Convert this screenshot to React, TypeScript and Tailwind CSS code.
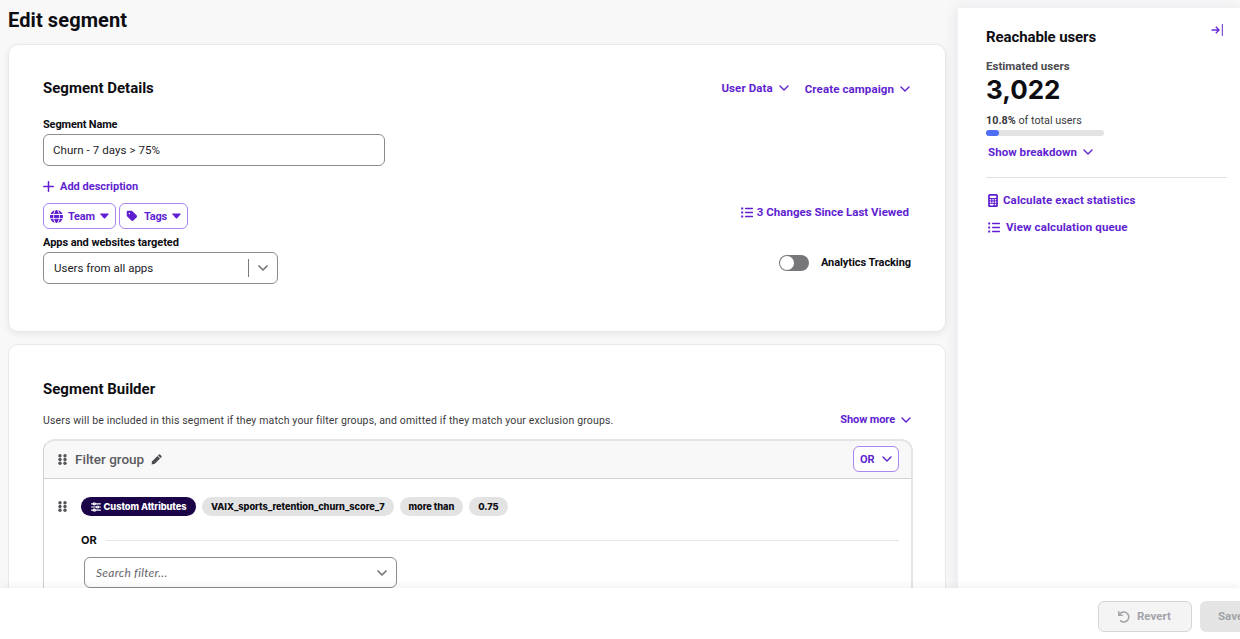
import React from "react";
import { FaCalculator, FaGlobe, FaTag } from "react-icons/fa6";

interface IIconProps {
    className?: string;
}

const ChevronIcon: React.FC<IIconProps> = ({ className = "stroke-[1.4]" }) => {
    return (
        <svg
            viewBox="0 0 10 6"
            fill="none"
            stroke="currentColor"
            strokeLinecap="round"
            strokeLinejoin="round"
            className={`w-2.5 h-1.5 shrink-0 ${className}`}
        >
            <path d="M1 1l4 4 4-4" />
        </svg>
    );
};

const CaretIcon: React.FC<IIconProps> = ({ className = "" }) => {
    return (
        <svg
            viewBox="0 0 8 5"
            fill="currentColor"
            stroke="currentColor"
            strokeLinejoin="round"
            className={`w-[9px] h-1.5 shrink-0 ${className}`}
        >
            <path d="M.7.7h6.6L4 4.3z" />
        </svg>
    );
};

const ListIcon: React.FC<IIconProps> = ({ className = "" }) => {
    return (
        <svg
            viewBox="0 0 12 11"
            fill="none"
            stroke="currentColor"
            className={`w-3 h-[11px] shrink-0 ${className}`}
        >
            <path d="M.2 1.5h2M.2 5.5h2M.2 9.5h2" strokeWidth="2" />
            <path
                d="M4.7 1.5h6.8M4.7 5.5h6.8M4.7 9.5h6.8"
                strokeWidth="1.5"
                strokeLinecap="round"
            />
        </svg>
    );
};

const GripIcon: React.FC<IIconProps> = ({ className = "" }) => {
    return (
        <svg
            viewBox="0 0 9 11"
            fill="currentColor"
            className={`w-[9px] h-[11px] shrink-0 text-[#55555a] ${className}`}
        >
            {[1.7, 5.5, 9.3].map((y) => (
                <g key={y}>
                    <circle cx="2" cy={y} r="1.7" />
                    <circle cx="7" cy={y} r="1.7" />
                </g>
            ))}
        </svg>
    );
};

const PencilIcon: React.FC<IIconProps> = ({ className = "" }) => {
    return (
        <svg
            viewBox="0 0 12 12"
            fill="currentColor"
            className={`shrink-0 ${className}`}
        >
            <path d="M.6 11.4l.7-3.6L7 2.1l2.9 2.9-5.7 5.7z" />
            <path d="M7.6 1.5l.7-.7a1.3 1.3 0 0 1 1.8 0l1.1 1.1a1.3 1.3 0 0 1 0 1.8l-.7.7z" />
        </svg>
    );
};

const SlidersIcon: React.FC = () => {
    return (
        <svg
            viewBox="0 0 10 10"
            fill="none"
            stroke="currentColor"
            strokeWidth="1.2"
            strokeLinecap="round"
            className="w-2.5 h-2.5 shrink-0"
        >
            <path d="M.6 1.8h1.6M4.4 1.8h5M.6 5h4.8M7.8 5h1.6M.6 8.2h1.6M4.4 8.2h5" />
            <circle cx="3.3" cy="1.8" r="1" />
            <circle cx="6.6" cy="5" r="1" />
            <circle cx="3.3" cy="8.2" r="1" />
        </svg>
    );
};

const Header: React.FC<{ children: React.ReactNode }> = ({ children }) => {
    return <h2 className="text-[15px] leading-5 font-bold">{children}</h2>;
};

const SegmentDetails: React.FC = () => {
    return (
        <section className="h-[288px] shrink-0 rounded-[10px] border border-[#e9e9eb] bg-white px-[34px] pt-[33px] shadow-[0_2px_6px_rgba(0,0,0,0.07)]">
            <div className="flex items-center justify-between">
                <Header>Segment Details</Header>
                <div className="mr-px flex items-center text-[11.5px] leading-4 font-bold tracking-[0.1px] text-[#5f1fd1]">
                    <button className="flex items-center gap-1.5">
                        User Data <ChevronIcon />
                    </button>
                    <button className="flex items-center gap-1.5 ml-4 mt-px">
                        Create campaign <ChevronIcon />
                    </button>
                </div>
            </div>

            <label className="block mt-[19px] text-[11px] leading-4 font-bold tracking-[-0.16px]">
                Segment Name
            </label>
            <div className="mt-px flex h-8 w-[342px] items-center rounded-md border border-[#8c8c90] px-[9px] text-[11.5px] tracking-[0.06px] pt-px text-[#222226]">
                Churn - 7 days &gt; 75%
            </div>

            <button className="mt-3 flex items-center gap-1.5 text-[11px] leading-[17px] font-bold text-[#5f1fd1]">
                <svg
                    viewBox="0 0 11 11"
                    stroke="currentColor"
                    strokeWidth="1.5"
                    strokeLinecap="round"
                    className="w-[11px] h-[11px]"
                >
                    <path d="M5.5 .8v9.4M.8 5.5h9.4" />
                </svg>
                Add description
            </button>

            <div className="mt-2 flex justify-between font-bold text-[#5f1fd1]">
                <div className="flex gap-[3px] text-[11px] leading-4">
                    <button className="flex h-[26px] w-[73px] items-center rounded-md border border-[#a887ee] pl-1.5">
                        <FaGlobe className="size-[13px]" />
                        <span className="ml-[5px] pt-px tracking-[-0.2px]">
                            Team
                        </span>
                        <CaretIcon className="ml-auto mr-1.5" />
                    </button>
                    <button className="flex h-[26px] w-[69px] items-center rounded-md border border-[#a887ee] pl-1.5">
                        <FaTag className="size-3" />
                        <span className="ml-1.5 pt-px tracking-[-0.2px]">
                            Tags
                        </span>
                        <CaretIcon className="ml-auto mr-1.5" />
                    </button>
                </div>
                <button className="mr-0.5 flex h-[18px] items-center gap-1 text-[11.5px] leading-4">
                    <ListIcon /> 3 Changes Since Last Viewed
                </button>
            </div>

            <div className="flex justify-between">
                <div>
                    <label className="block mt-1.5 text-[11px] leading-4 font-bold tracking-[-0.06px]">
                        Apps and websites targeted
                    </label>
                    <div className="mt-px flex h-8 w-[235px] items-center rounded-md border border-[#8c8c90] pl-2.5 text-[11.5px] text-[#222226]">
                        <span className="pt-0.5">Users from all apps</span>
                        <span className="ml-auto h-[18px] w-px bg-[#7b7b7f]" />
                        <ChevronIcon className="mx-[9px] text-[#77777b] stroke-[1.7]" />
                    </div>
                </div>
                <div className="mt-[26px] flex h-4 items-center gap-3 text-[11px] font-bold tracking-[-0.07px]">
                    <span className="flex h-4 w-[30px] items-center rounded-full bg-[#77777b] px-px">
                        <span className="size-3.5 rounded-full bg-white" />
                    </span>
                    Analytics Tracking
                </div>
            </div>
        </section>
    );
};

const chips = ["VAIX_sports_retention_churn_score_7", "more than", "0.75"];

const SegmentBuilder: React.FC = () => {
    return (
        <section className="mt-3 h-[400px] shrink-0 rounded-[10px] border border-[#e9e9eb] bg-white pl-[34px] pr-8 pt-[34px]">
            <Header>Segment Builder</Header>
            <div className="mt-3 mr-0.5 flex h-5 items-center justify-between">
                <p className="text-[10.5px] leading-4 tracking-[0.15px] text-[#3a3a3e]">
                    Users will be included in this segment if they match your
                    filter groups, and omitted if they match your exclusion
                    groups.
                </p>
                <button className="mb-0.5 flex items-center gap-1.5 text-[11px] leading-4 font-bold tracking-[-0.1px] text-[#5f1fd1]">
                    Show more <ChevronIcon />
                </button>
            </div>

            <div className="mt-2 h-[300px] overflow-hidden rounded-xl border-l border-t-2 border-r-2 border-l-[#cfcfd2] border-t-[#e4e4e6] border-r-[#e4e4e6]">
                <div className="flex h-[38px] items-center border-b border-[#d2d2d5] bg-[#f8f8f8] pl-3.5 pr-3">
                    <GripIcon />
                    <span className="ml-2 pb-0.5 text-[13.5px] leading-5 font-medium text-[#5a5a5e]">
                        Filter group
                    </span>
                    <PencilIcon className="ml-[7px] size-[11px] text-[#4b4b4f]" />
                    <button className="ml-auto mb-px flex h-[26px] w-[46px] items-center justify-between rounded-md border border-[#a887ee] bg-white px-1.5 text-[11px] font-bold text-[#5f1fd1]">
                        <span className="pt-0.5">OR</span> <ChevronIcon />
                    </button>
                </div>

                <div className="mt-[18px] flex h-[19px] items-center pl-3.5 font-['Inter',sans-serif] text-[9.25px] leading-3 font-extrabold tracking-[-0.06px]">
                    <GripIcon />
                    <span className="ml-3.5 flex h-[19px] w-[115px] items-center justify-center gap-[3px] rounded-full bg-[#1b0447] text-white">
                        <SlidersIcon /> Custom Attributes
                    </span>
                    {chips.map((chip) => (
                        <span
                            key={chip}
                            className="ml-1.5 flex h-[19px] items-center rounded-full bg-[#e3e3e4] px-[9px]"
                        >
                            {chip}
                        </span>
                    ))}
                </div>

                <div className="mt-4 ml-[37px] mr-3 flex h-4 items-center gap-[9px] font-['Inter',sans-serif] text-[11px] font-bold">
                    OR
                    <span className="h-px flex-1 bg-[#e6e6e8]" />
                </div>

                <div className="mt-[9px] ml-10 flex h-[31px] w-[313px] items-center justify-between rounded-md border border-[#8c8c90] pl-[11px] pr-[9px] font-['Lato','Noto_Sans',sans-serif] text-xs tracking-[0.02em] italic text-[#66666a]">
                    Search filter...
                    <ChevronIcon className="text-[#77777b] stroke-[1.7]" />
                </div>
            </div>
        </section>
    );
};

const ReachableUsers: React.FC = () => {
    return (
        <aside className="mt-2 ml-3 w-[282px] shrink-0 bg-white pl-7 pr-[13px] pt-[19px] shadow-[-2px_0_14px_rgba(20,20,50,0.08)]">
            <div className="flex justify-between tracking-[-0.1px]">
                <Header>Reachable users</Header>
                <svg
                    viewBox="0 0 12 12"
                    fill="none"
                    stroke="#6a2bd6"
                    className="-mt-[3px] mr-1 w-3 h-3"
                >
                    <path d="M.5 6h7.3M4.8 2.8L8 6 4.8 9.2" strokeWidth="1.4" />
                    <path d="M11.3 0v12" strokeWidth="1" />
                </svg>
            </div>
            <p className="mt-[11px] text-[11.5px] leading-4 font-bold text-[#4b4b4f]">
                Estimated users
            </p>
            <p className="font-['Inter',sans-serif] text-[26px] leading-8 font-bold">
                3,022
            </p>
            <p className="mt-[7px] text-[10.8px] leading-4 text-[#3a3a3e]">
                <b>10.8%</b> of total users
            </p>
            <div className="mt-px h-1.5 w-[118px] rounded-full bg-[#e3e3e4]">
                <div className="h-1.5 w-[13px] rounded-full bg-[#4f6df5]" />
            </div>
            <button className="mt-2 ml-0.5 flex items-center gap-1.5 text-[11.5px] leading-4 font-bold tracking-[0.06px] text-[#5f1fd1]">
                Show breakdown <ChevronIcon />
            </button>
            <hr className="mt-[17px] border-[#e1e1e3]" />
            <div className="mt-3.5 ml-0.5 flex flex-col items-start gap-[11px] text-[11.5px] leading-4 font-bold tracking-[0.1px] text-[#5f1fd1]">
                <button className="flex items-center gap-[5px]">
                    <FaCalculator className="w-2.5 h-[13px]" /> Calculate exact
                    statistics
                </button>
                <button className="flex items-center gap-1.5">
                    <ListIcon /> View calculation queue
                </button>
            </div>
        </aside>
    );
};

const Footer: React.FC = () => {
    return (
        <footer className="relative flex h-[51px] shrink-0 justify-end gap-2 bg-white pt-[13px] text-[11.5px] font-bold text-[#a3a3a8] shadow-[0_-2px_8px_rgba(0,0,0,0.06)]">
            <button className="flex h-[31px] w-[94px] items-center gap-[7px] rounded-md border border-[#d6d6d9] bg-[#f4f4f5] pl-[19px]">
                <svg
                    viewBox="0 0 12 12"
                    fill="none"
                    stroke="currentColor"
                    strokeWidth="1.5"
                    strokeLinecap="round"
                    strokeLinejoin="round"
                    className="w-3 h-3"
                >
                    <path d="M.8 .8v3.4h3.4" />
                    <path d="M1.2 4A5 5 0 1 1 2.6 9.8" />
                </svg>
                Revert
            </button>
            <button className="h-[31px] w-10 overflow-hidden rounded-l-md bg-[#e4e4e5] pl-[18px] text-left">
                Save
            </button>
        </footer>
    );
};

const App: React.FC = () => {
    return (
        <div className="flex h-[639px] w-[1240px] flex-col overflow-hidden bg-[#f8f8f9] font-['Roboto',sans-serif] text-[#0d0d12]">
            <div className="flex h-[588px] min-h-0 overflow-hidden">
                <main className="ml-2 flex w-[938px] shrink-0 flex-col">
                    <h1 className="flex h-11 shrink-0 items-center pb-[5px] text-[20px] font-bold tracking-[0.1px]">
                        Edit segment
                    </h1>
                    <SegmentDetails />
                    <SegmentBuilder />
                </main>
                <ReachableUsers />
            </div>
            <Footer />
        </div>
    );
};

export default App;
